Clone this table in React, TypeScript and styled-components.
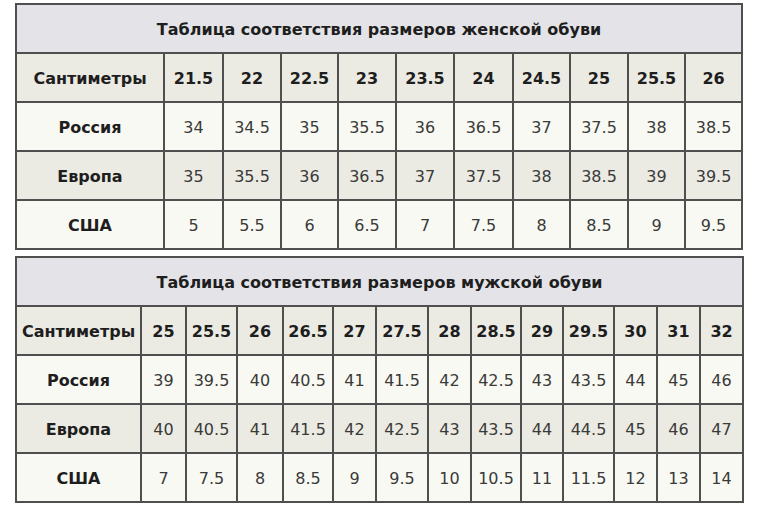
import React from "react";
import styled, { createGlobalStyle } from "styled-components";

const Global = createGlobalStyle`
  html, body { margin: 0; padding: 0; background: #ffffff; }
  body { font-family: "DejaVu Sans", Verdana, sans-serif; }
`;

const Page = styled.div`
  display: flex;
  flex-direction: column;
  gap: 6px;
  padding: 3px 0 0 15px;
`;

const Table = styled.table`
  width: 728px;
  table-layout: fixed;
  border-collapse: separate;
  border-spacing: 0;
  border-right: 2px solid #4f4f4f;
  border-bottom: 2px solid #4f4f4f;
  box-sizing: border-box;
  font-size: 16px;
`;

const Col = styled.col<{ $w: number }>`
  width: ${(p) => p.$w}px;
`;

const Row = styled.tr<{ $bg: string }>`
  height: 49px;
  background: ${(p) => p.$bg};
`;

const Cell = styled.td`
  box-sizing: border-box;
  border-left: 2px solid #4f4f4f;
  border-top: 2px solid #4f4f4f;
  padding: 1px 0 0;
  text-align: center;
  vertical-align: middle;
  white-space: nowrap;
  color: #3a3a3a;
`;

const TitleCell = styled(Cell)`
  background: #e4e4e8;
  color: #1e1e1e;
  font-weight: bold;
`;

const HeadCell = styled(Cell)`
  font-weight: bold;
  color: #1e1e1e;
`;

const LabelCell = styled(Cell)`
  font-weight: bold;
  color: #1e1e1e;
`;

type Spec = {
  title: string;
  widths: number[];
  cm: string[];
  rows: { label: string; values: string[] }[];
};

const women: Spec = {
  title: "Таблица соответствия размеров женской обуви",
  widths: [148, 59, 58, 57, 58, 58, 59, 57, 58, 57, 57],
  cm: ["21.5", "22", "22.5", "23", "23.5", "24", "24.5", "25", "25.5", "26"],
  rows: [
    { label: "Россия", values: ["34", "34.5", "35", "35.5", "36", "36.5", "37", "37.5", "38", "38.5"] },
    { label: "Европа", values: ["35", "35.5", "36", "36.5", "37", "37.5", "38", "38.5", "39", "39.5"] },
    { label: "США", values: ["5", "5.5", "6", "6.5", "7", "7.5", "8", "8.5", "9", "9.5"] },
  ],
};

const men: Spec = {
  title: "Таблица соответствия размеров мужской обуви",
  widths: [125, 45, 51, 46, 50, 43, 52, 43, 50, 42, 51, 43, 43, 43],
  cm: ["25", "25.5", "26", "26.5", "27", "27.5", "28", "28.5", "29", "29.5", "30", "31", "32"],
  rows: [
    { label: "Россия", values: ["39", "39.5", "40", "40.5", "41", "41.5", "42", "42.5", "43", "43.5", "44", "45", "46"] },
    { label: "Европа", values: ["40", "40.5", "41", "41.5", "42", "42.5", "43", "43.5", "44", "44.5", "45", "46", "47"] },
    { label: "США", values: ["7", "7.5", "8", "8.5", "9", "9.5", "10", "10.5", "11", "11.5", "12", "13", "14"] },
  ],
};

const rowBg = ["#f9f9f3", "#ebebe3", "#f9f9f3"];

function SizeTable({ spec }: { spec: Spec }) {
  return (
    <Table>
      <colgroup>
        {spec.widths.map((w, i) => (
          <Col key={i} $w={w} />
        ))}
      </colgroup>
      <tbody>
        <Row $bg="#e4e4e8">
          <TitleCell colSpan={spec.widths.length}>{spec.title}</TitleCell>
        </Row>
        <Row $bg="#ebebe3">
          <HeadCell>Сантиметры</HeadCell>
          {spec.cm.map((c) => (
            <HeadCell key={c}>{c}</HeadCell>
          ))}
        </Row>
        {spec.rows.map((r, i) => (
          <Row key={r.label} $bg={rowBg[i]}>
            <LabelCell>{r.label}</LabelCell>
            {r.values.map((v, j) => (
              <Cell key={j}>{v}</Cell>
            ))}
          </Row>
        ))}
      </tbody>
    </Table>
  );
}

export default function App() {
  return (
    <>
      <Global />
      <Page>
        <SizeTable spec={women} />
        <SizeTable spec={men} />
      </Page>
    </>
  );
}
